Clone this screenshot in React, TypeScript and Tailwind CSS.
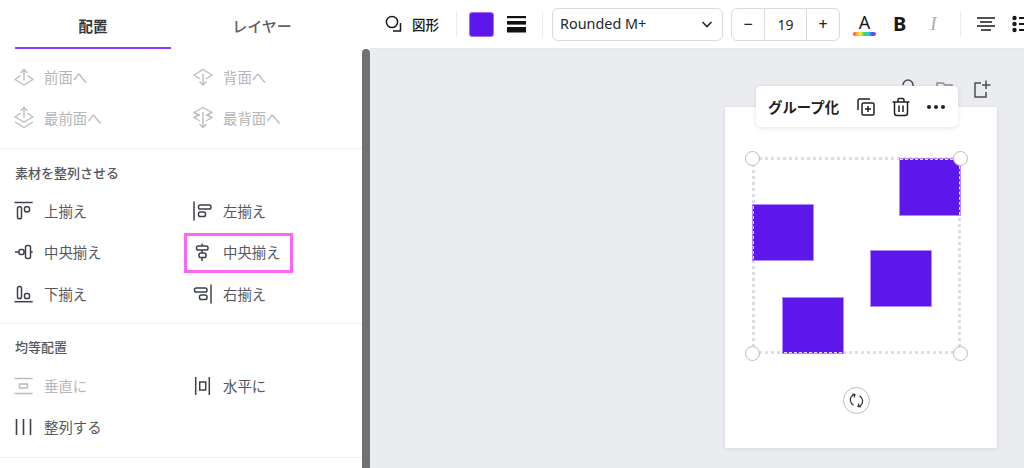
import React from 'react';

const jp = { fontFamily: '"Noto Sans CJK JP", "Noto Sans", sans-serif' };

// Panel icons, all on a 20x20 box
const IconForward = () => (
  <svg width="20" height="20" viewBox="0 0 20 20" fill="none" stroke="currentColor" strokeWidth="1.4">
    <path d="M6.5 8.5 L1 12.5 L10 18 L19 12.5 L13.5 8.5" strokeLinejoin="round" />
    <path d="M10 13.5 V2.5 M6.5 6 L10 2.5 L13.5 6" />
  </svg>
);
const IconBackward = () => (
  <svg width="20" height="20" viewBox="0 0 20 20" fill="none" stroke="currentColor" strokeWidth="1.4">
    <path d="M7 12 L1 8 L10 2.5 L19 8 L13 12" strokeLinejoin="round" />
    <path d="M10 7 V18 M6.5 14.5 L10 18 L13.5 14.5" />
  </svg>
);
const IconFront = () => (
  <svg width="20" height="24" viewBox="0 0 20 24" fill="none" stroke="currentColor" strokeWidth="1.4">
    <path d="M6.5 7 L1 11 L10 16 L19 11 L13.5 7" strokeLinejoin="round" />
    <path d="M1 16 L10 21.5 L19 16" strokeLinejoin="round" />
    <path d="M10 12 V1.5 M6.5 5 L10 1.5 L13.5 5" />
  </svg>
);
const IconBack = () => (
  <svg width="20" height="24" viewBox="0 0 20 24" fill="none" stroke="currentColor" strokeWidth="1.4">
    <path d="M7 9.5 L1 6.5 L10 1.5 L19 6.5 L13 9.5" strokeLinejoin="round" />
    <path d="M7 15 L1 11.5 L6 9 M13 15 L19 11.5 L14 9" strokeLinejoin="round" />
    <path d="M10 6 V21.5 M6.5 18 L10 21.5 L13.5 18" />
  </svg>
);
const AlignTop = () => (
  <svg width="20" height="20" viewBox="0 0 20 20" fill="none" stroke="currentColor" strokeWidth="1.5">
    <path d="M0.5 1.5 H18.7" />
    <rect x="3.5" y="5.7" width="4" height="12" rx="1.8" />
    <rect x="10.5" y="5.7" width="5" height="5" rx="1.8" />
  </svg>
);
const AlignMiddle = () => (
  <svg width="20" height="20" viewBox="0 0 20 20" fill="none" stroke="currentColor" strokeWidth="1.5">
    <path d="M1 10 H18.7" />
    <rect x="5" y="7.5" width="5" height="5" rx="1.8" fill="#fff" />
    <rect x="11.5" y="3.5" width="5" height="13" rx="2" fill="#fff" />
  </svg>
);
const AlignBottom = () => (
  <svg width="20" height="20" viewBox="0 0 20 20" fill="none" stroke="currentColor" strokeWidth="1.5">
    <path d="M0.5 17.7 H18.7" />
    <rect x="3.5" y="2.5" width="4" height="12" rx="1.8" />
    <rect x="10.5" y="9.5" width="5" height="5" rx="1.8" />
  </svg>
);
const AlignLeft = () => (
  <svg width="20" height="20" viewBox="0 0 20 20" fill="none" stroke="currentColor" strokeWidth="1.5">
    <path d="M1 0.5 V19.5" />
    <rect x="5.5" y="4" width="12.5" height="4" rx="1.8" />
    <rect x="5.5" y="11" width="7" height="4.5" rx="1.8" />
  </svg>
);
const AlignCenter = () => (
  <svg width="20" height="20" viewBox="0 0 20 20" fill="none" stroke="currentColor" strokeWidth="1.5">
    <path d="M9 1.5 V19" />
    <rect x="3.5" y="4" width="11.5" height="4" rx="1.8" fill="#fff" />
    <rect x="6" y="11" width="7" height="4.5" rx="1.8" fill="#fff" />
  </svg>
);
const AlignRight = () => (
  <svg width="20" height="20" viewBox="0 0 20 20" fill="none" stroke="currentColor" strokeWidth="1.5">
    <path d="M18 0.5 V19.5" />
    <rect x="1.5" y="4" width="12.5" height="4" rx="1.8" />
    <rect x="6.5" y="11" width="7.5" height="4.5" rx="1.8" />
  </svg>
);
const SpaceVertical = () => (
  <svg width="20" height="20" viewBox="0 0 20 20" fill="none" stroke="currentColor" strokeWidth="1.5">
    <path d="M0.5 2.5 H18.7 M0.5 17.5 H18.7" />
    <rect x="5.5" y="8" width="8" height="4" />
  </svg>
);
const SpaceHorizontal = () => (
  <svg width="20" height="20" viewBox="0 0 20 20" fill="none" stroke="currentColor" strokeWidth="1.5">
    <path d="M2.7 1 V19 M16.3 1 V19" />
    <rect x="6.7" y="6" width="6" height="8" />
  </svg>
);
const Tidy = () => (
  <svg width="20" height="20" viewBox="0 0 20 20" fill="none" stroke="currentColor" strokeWidth="1.6">
    <path d="M2.5 2 V18 M9.5 2 V18 M16.5 2 V18" />
  </svg>
);

const Row = ({ icon, label, off }: { icon: React.ReactNode; label: string; off?: boolean }) => (
  <div className={`flex h-[41.5px] items-center ${off ? 'text-[#b9bcc1]' : 'text-[#3c4048]'}`}>
    <div className="flex w-[20px] justify-center">{icon}</div>
    <span className={`ml-[10px] text-[14.4px] ${off ? 'text-[#b4b6ba]' : 'text-[#55585e]'}`}>{label}</span>
  </div>
);

const Heading = ({ children }: { children: React.ReactNode }) => (
  <div className="h-[20px] text-[13px] leading-[20px] font-medium text-[#55585e]">{children}</div>
);

const Sep = ({ cls }: { cls: string }) => <div className={`h-[25px] w-px bg-[#e9ebee] ${cls}`} />;

export default function App() {
  return (
    <div className="flex h-[468px] w-[1024px] overflow-hidden bg-white" style={jp}>
      {/* Left panel */}
      <aside className="relative w-[370px] shrink-0 overflow-hidden bg-white">
        <div className="flex h-[49px] pl-[15px] pr-[17px]">
          <div className="flex w-[156px] items-center justify-center border-b-2 border-[#8b3dff] pt-[4px] text-[14.5px] font-bold text-[#33363b]">
            配置
          </div>
          <div className="flex flex-1 items-center justify-center pt-[4px] text-[15px] font-medium text-[#5d6066]">
            レイヤー
          </div>
        </div>

        <section className="border-b border-[#eceef0] pb-[9px] pl-[14px] pt-[7px]">
          <div className="grid grid-cols-[179px_1fr]">
            <Row off icon={<IconForward />} label="前面へ" />
            <Row off icon={<IconBackward />} label="背面へ" />
            <Row off icon={<IconFront />} label="最前面へ" />
            <Row off icon={<IconBack />} label="最背面へ" />
          </div>
        </section>

        <section className="border-b border-[#eceef0] pb-[8.5px] pl-[14px] pt-[14px]">
          <div className="pl-px">
            <Heading>素材を整列させる</Heading>
          </div>
          <div className="mt-[7px] grid grid-cols-[179px_1fr]">
            <Row icon={<AlignTop />} label="上揃え" />
            <Row icon={<AlignLeft />} label="左揃え" />
            <Row icon={<AlignMiddle />} label="中央揃え" />
            <div className="relative">
              <Row icon={<AlignCenter />} label="中央揃え" />
              <div className="absolute left-[-9px] top-[1px] h-[40px] w-[109px] border-[3px] border-[#ff66f7]" />
            </div>
            <Row icon={<AlignBottom />} label="下揃え" />
            <Row icon={<AlignRight />} label="右揃え" />
          </div>
        </section>

        <section className="border-b border-[#eceef0] pb-[9px] pl-[14px] pt-[13px]">
          <div className="pl-px">
            <Heading>均等配置</Heading>
          </div>
          <div className="mt-[8px] grid grid-cols-[179px_1fr]">
            <Row off icon={<SpaceVertical />} label="垂直に" />
            <Row icon={<SpaceHorizontal />} label="水平に" />
            <Row icon={<Tidy />} label="整列する" />
          </div>
        </section>

        {/* Scrollbar */}
        <div className="absolute bottom-0 right-0 top-[49px] w-[8px] rounded-t-[4px] bg-[#6f7175]" />
      </aside>

      <main className="flex min-w-0 flex-1 flex-col">
        {/* Top toolbar */}
        <div className="flex h-[49px] shrink-0 items-center overflow-hidden border-b border-[#e7e8ec] bg-white text-[#17191c]">
          <svg className="ml-[15px] shrink-0" width="18" height="20" viewBox="0 0 18 20" fill="none" stroke="currentColor" strokeWidth="1.5">
            <circle cx="7" cy="8" r="5.6" />
            <path d="M15.5 9 V17 H8" />
          </svg>
          <span className="ml-[9px] shrink-0 text-[13.5px] font-medium">図形</span>
          <Sep cls="ml-[17px] shrink-0" />
          <div className="ml-[12px] h-[25px] w-[25px] shrink-0 rounded-[3px] border border-[#a56bff] bg-[#5e17eb]" />
          <svg className="ml-[13px] shrink-0" width="19" height="20" viewBox="0 0 19 20" fill="#101214">
            <rect x="0" y="2" width="19" height="2.2" />
            <rect x="0" y="7" width="19" height="3.6" />
            <rect x="0" y="13" width="19" height="5.5" />
          </svg>
          <Sep cls="ml-[16px] shrink-0" />
          <div
            className="ml-[9px] flex h-[33px] w-[171px] shrink-0 items-center justify-between rounded-[6px] border border-[#d8dade] pl-[7px] pr-[8px] text-[14.4px] text-[#24272b]"
            style={{ fontFamily: '"Noto Sans", sans-serif' }}
          >
            <span>Rounded M+</span>
            <svg width="14" height="14" viewBox="0 0 14 14" fill="none" stroke="currentColor" strokeWidth="1.6">
              <path d="M2.5 5 L7 9.5 L11.5 5" />
            </svg>
          </div>
          <div
            className="ml-[8px] flex h-[33px] w-[109px] shrink-0 items-stretch rounded-[6px] border border-[#d8dade] text-[14px] text-[#24272b]"
            style={{ fontFamily: '"Noto Sans", sans-serif' }}
          >
            <div className="flex w-[33px] items-center justify-center border-r border-[#d8dade] text-[16px] font-medium">−</div>
            <div className="flex w-[42px] items-center justify-center border-r border-[#d8dade]">19</div>
            <div className="flex flex-1 items-center justify-center text-[16px] font-medium">+</div>
          </div>
          <div className="ml-[13px] flex w-[23px] shrink-0 flex-col items-center">
            <span className="text-[18px] leading-[19px] text-[#17191c]" style={{ fontFamily: '"Noto Sans", sans-serif' }}>A</span>
            <div className="h-[4px] w-[23px] rounded-full bg-[linear-gradient(90deg,#f5393c,#fbb03b,#f7ec3a,#39d353,#33c6f4,#4a55e8,#a13de0)]" />
          </div>
          <span className="ml-[17px] shrink-0 text-[20px] font-bold" style={{ fontFamily: '"Noto Sans", sans-serif' }}>B</span>
          <span className="ml-[24px] shrink-0 text-[19px] italic text-[#a9acb1]" style={{ fontFamily: '"Liberation Serif", serif' }}>I</span>
          <Sep cls="ml-[23px] shrink-0" />
          <svg className="ml-[15px] shrink-0" width="20" height="16" viewBox="0 0 20 16" fill="none" stroke="currentColor" strokeWidth="1.5">
            <path d="M1 2 H19 M4 6 H16 M1 10 H19 M5 14 H15" />
          </svg>
          <svg className="ml-[16px] shrink-0" width="16" height="18" viewBox="0 0 16 18" fill="currentColor">
            <circle cx="2.5" cy="3" r="2.2" />
            <circle cx="2.5" cy="9" r="2.2" />
            <circle cx="2.5" cy="15" r="2.2" />
            <rect x="7" y="2" width="9" height="2" />
            <rect x="7" y="8" width="9" height="2" />
            <rect x="7" y="14" width="9" height="2" />
          </svg>
        </div>

        {/* Canvas */}
        <div className="relative flex-1 bg-[#ebecf0]">
          {/* Page actions behind the floating bar */}
          <svg className="absolute left-[528px] top-[30px] text-[#4b4e54]" width="20" height="20" viewBox="0 0 20 20" fill="none" stroke="currentColor" strokeWidth="1.5">
            <path d="M5 6 A5 5 0 0 1 15 6 V12" />
          </svg>
          <svg className="absolute left-[565px] top-[30px] text-[#8a8d93]" width="20" height="20" viewBox="0 0 20 20" fill="none" stroke="currentColor" strokeWidth="1.5">
            <path d="M2 8 V4 H8 L10 6 H17 V10" />
          </svg>
          <svg className="absolute left-[602px] top-[30px] text-[#4b4e54]" width="20" height="20" viewBox="0 0 20 20" fill="none" stroke="currentColor" strokeWidth="1.5">
            <path d="M9 4 H3 V18 H14 V13 M14 1.5 V10 M10 6 H18.5" />
          </svg>

          {/* Page */}
          <div className="absolute left-[355px] top-[58px] h-[341px] w-[272px] bg-white shadow-[0_1px_4px_rgba(60,64,80,0.12)]" />

          {/* Purple squares */}
          <div className="absolute left-[529px] top-[109px] h-[58px] w-[62px] border border-[#b488ff] bg-[#5e17eb]" />
          <div className="absolute left-[382px] top-[155px] h-[57px] w-[62px] border border-[#b488ff] bg-[#5e17eb]" />
          <div className="absolute left-[500px] top-[201px] h-[57px] w-[62px] border border-[#b488ff] bg-[#5e17eb]" />
          <div className="absolute left-[412px] top-[248px] h-[57px] w-[62px] border border-[#b488ff] bg-[#5e17eb]" />

          {/* Selection frame: the squares hide it, the dashes below carry it over them */}
          <div className="absolute left-[381.5px] top-[108px] h-[197px] w-[209px] border-[3px] border-dotted border-[#dcdee2]" />
          <div className="absolute left-[529px] top-[109px] h-[4px] w-[62px] border-x border-t border-[#b488ff] bg-[#5e17eb]" />
          <div className="absolute left-[587px] top-[109px] h-[58px] w-[4px] border-y border-r border-[#b488ff] bg-[#5e17eb]" />
          <div className="absolute left-[382px] top-[155px] h-[57px] w-[4px] border-y border-l border-[#b488ff] bg-[#5e17eb]" />
          <div className="absolute left-[412px] top-[301px] h-[4px] w-[62px] border-x border-b border-[#b488ff] bg-[#5e17eb]" />
          <div className="absolute left-[530px] top-[110px] h-0 w-[58px] border-t border-dashed border-[#e9ddff]" />
          <div className="absolute left-[589px] top-[112px] h-[54px] w-0 border-l border-dashed border-[#e9ddff]" />
          <div className="absolute left-[383px] top-[157px] h-[53px] w-0 border-l border-dashed border-[#e9ddff]" />
          <div className="absolute left-[414px] top-[303px] h-0 w-[58px] border-t border-dashed border-[#e9ddff]" />

          {/* Handles */}
          <div className="absolute left-[375px] top-[102px] h-[15px] w-[15px] rounded-full border border-[#b9bcc1] bg-white" />
          <div className="absolute left-[583px] top-[102px] h-[15px] w-[15px] rounded-full border border-[#b9bcc1] bg-white" />
          <div className="absolute left-[375px] top-[297px] h-[15px] w-[15px] rounded-full border border-[#b9bcc1] bg-white" />
          <div className="absolute left-[583px] top-[297px] h-[15px] w-[15px] rounded-full border border-[#b9bcc1] bg-white" />

          {/* Rotate */}
          <div className="absolute left-[473px] top-[338px] flex h-[27px] w-[27px] items-center justify-center rounded-full border border-[#b9bcc1] bg-white text-[#2b2e33]">
            <svg width="15" height="15" viewBox="0 0 15 15" fill="none" stroke="currentColor" strokeWidth="1.2">
              <path d="M5.5 1.5 C2.5 2.5 1 5 1.5 8 C1.8 10 3 11.3 4.5 12.2" />
              <path d="M3 1 L6 1.5 L5.2 4.3" />
              <path d="M9.5 13.5 C12.5 12.5 14 10 13.5 7 C13.2 5 12 3.7 10.5 2.8" />
              <path d="M12 14 L9 13.5 L9.8 10.7" />
            </svg>
          </div>

          {/* Floating bar */}
          <div className="absolute left-[386px] top-[37px] flex h-[41px] w-[202px] items-center rounded-[5px] bg-white pl-[12px] text-[#1f2226] shadow-[0_1px_4px_rgba(60,64,80,0.15)]">
            <span className="text-[14.4px] font-bold">グループ化</span>
            <svg className="ml-[17px] shrink-0" width="20" height="20" viewBox="0 0 20 20" fill="none" stroke="currentColor" strokeWidth="1.5">
              <path d="M14 2 H3.5 A1.5 1.5 0 0 0 2 3.5 V13" />
              <rect x="6" y="6" width="12" height="12" rx="1.5" />
              <path d="M12 9 V15 M9 12 H15" />
            </svg>
            <svg className="ml-[15px] shrink-0" width="20" height="20" viewBox="0 0 20 20" fill="none" stroke="currentColor" strokeWidth="1.5">
              <path d="M1.5 5 H18.5 M7 5 V3 A1.5 1.5 0 0 1 8.5 1.5 H11.5 A1.5 1.5 0 0 1 13 3 V5" />
              <path d="M3.5 5 V16 A2.5 2.5 0 0 0 6 18.5 H14 A2.5 2.5 0 0 0 16.5 16 V5" />
              <path d="M8 8.5 V15 M12 8.5 V15" />
            </svg>
            <svg className="ml-[15px] shrink-0" width="20" height="6" viewBox="0 0 20 6" fill="currentColor">
              <circle cx="3" cy="3" r="2" />
              <circle cx="10" cy="3" r="2" />
              <circle cx="17" cy="3" r="2" />
            </svg>
          </div>
        </div>
      </main>
    </div>
  );
}
